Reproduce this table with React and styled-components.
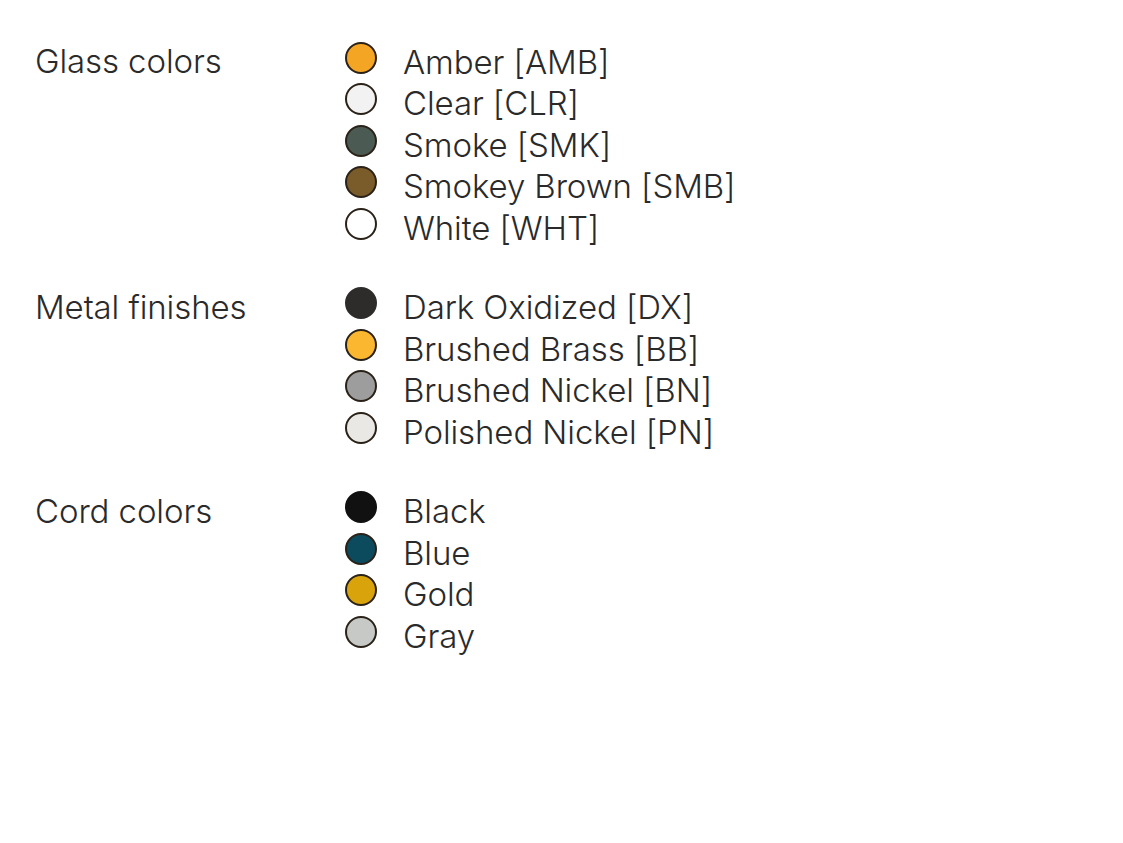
import React from 'react'
import styled, { createGlobalStyle } from 'styled-components'

const groups = [
    {
        title: 'Glass colors',
        items: [
            { name: 'Amber [AMB]', color: '#f5a524' },
            { name: 'Clear [CLR]', color: '#f2f2f2' },
            { name: 'Smoke [SMK]', color: '#4b5a52' },
            { name: 'Smokey Brown [SMB]', color: '#7a5b2a' },
            { name: 'White [WHT]', color: '#ffffff' },
        ],
    },
    {
        title: 'Metal finishes',
        items: [
            { name: 'Dark Oxidized [DX]', color: '#2e2b2b', border: '#2e2b2b' },
            { name: 'Brushed Brass [BB]', color: '#fbb72f' },
            { name: 'Brushed Nickel [BN]', color: '#9d9d9d' },
            { name: 'Polished Nickel [PN]', color: '#e9e8e4' },
        ],
    },
    {
        title: 'Cord colors',
        items: [
            { name: 'Black', color: '#111111', border: '#111111' },
            { name: 'Blue', color: '#0c4a5e' },
            { name: 'Gold', color: '#d9a30c' },
            { name: 'Gray', color: '#c6c9c6' },
        ],
    },
]

function App() {
    return (
        <>
            <GlobalStyle />
            <Page>
                {groups.map((group) => (
                    <Group key={group.title}>
                        <Label>{group.title}</Label>
                        <Swatches>
                            {group.items.map((item) => (
                                <Swatch key={item.name}>
                                    <Dot $color={item.color} $border={item.border} />
                                    <span>{item.name}</span>
                                </Swatch>
                            ))}
                        </Swatches>
                    </Group>
                ))}
            </Page>
        </>
    )
}

export default App

const GlobalStyle = createGlobalStyle`
    * {
        box-sizing: border-box;
        margin: 0;
        padding: 0;
    }

    body {
        background: #fff;
        font-family: "Inter", "Roboto", sans-serif;
        color: #2a2a2a;
    }
`

const Page = styled.div`
    padding: 41px 0 0 35px;
    display: flex;
    flex-direction: column;
    gap: 38px;
`

const Group = styled.div`
    display: grid;
    grid-template-columns: 310px 1fr;
`

const Label = styled.h3`
    font-weight: 300;
    font-size: 33px;
    line-height: 41.5px;
    letter-spacing: -0.1px;
    color: #2a2a2a;
`

const Swatches = styled.ul`
    list-style: none;
    display: flex;
    flex-direction: column;
`

const Swatch = styled.li`
    display: flex;
    align-items: center;
    gap: 26px;
    height: 41.5px;
    font-weight: 300;
    font-size: 33px;
    letter-spacing: -0.1px;
    color: #2a2a2a;
    white-space: nowrap;
`

const Dot = styled.span`
    width: 32px;
    height: 32px;
    border-radius: 50%;
    background: ${(p) => p.$color};
    border: 2px solid ${(p) => p.$border || '#2a2218'};
    flex-shrink: 0;
    margin-top: -8px;
`
